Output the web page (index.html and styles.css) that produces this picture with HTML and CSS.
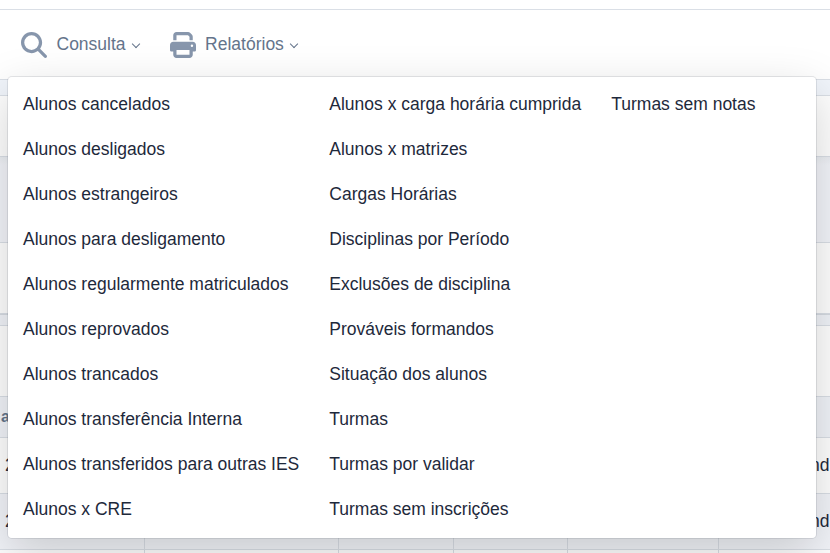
FILE: index.html
```html
<!DOCTYPE html>
<html lang="pt-BR">
<head>
<meta charset="utf-8">
<title>Relatórios</title>
<link rel="stylesheet" href="styles.css">
</head>
<body>
<div class="page">
  <div class="topbar"></div>
  <nav class="nav">
    <a class="nav-item">
      <svg class="icon" viewBox="0 0 512 512"><path d="M416 208c0 45.900-14.900 88.300-40 122.700L502.600 457.400c12.500 12.500 12.500 32.800 0 45.300s-32.800 12.500-45.300 0L330.700 376c-34.400 25.200-76.800 40-122.700 40C93.100 416 0 322.900 0 208S93.100 0 208 0S416 93.100 416 208zM208 352a144 144 0 1 0 0-288 144 144 0 1 0 0 288z"/></svg>
      <span>Consulta</span><i class="caret"></i>
    </a>
    <a class="nav-item">
      <svg class="icon" viewBox="0 0 512 512"><path d="M128 0C92.700 0 64 28.700 64 64v96h64V64H354.700L384 93.300V160h64V93.300c0-17-6.700-33.300-18.700-45.300L400 18.700C388 6.700 371.700 0 354.700 0H128zM384 352v32 64H128V384 368 352H384zm64 32h32c17.700 0 32-14.300 32-32V256c0-35.300-28.700-64-64-64H64c-35.300 0-64 28.700-64 64v96c0 17.700 14.300 32 32 32H64v64c0 35.300 28.700 64 64 64H384c35.300 0 64-28.700 64-64V384zM432 248a24 24 0 1 1 0 48 24 24 0 1 1 0-48z"/></svg>
      <span>Relatórios</span><i class="caret"></i>
    </a>
  </nav>
  <div class="strip"></div>
  <div class="panel heading"></div>
  <div class="gap"></div>
  <div class="panel filters"></div>
  <div class="divider"></div>
  <div class="panel tools"></div>
  <div class="table">
    <div class="row head"><div>a</div><div></div><div></div><div></div><div></div><div></div></div>
    <div class="row"><div>2</div><div></div><div></div><div></div><div></div><div>nd</div></div>
    <div class="row odd"><div>2</div><div></div><div></div><div></div><div></div><div>nd</div></div>
    <div class="row"><div></div><div></div><div></div><div></div><div></div><div></div></div>
  </div>
</div>
<div class="menu">
  <div class="col">
    <a>Alunos cancelados</a><a>Alunos desligados</a><a>Alunos estrangeiros</a><a>Alunos para desligamento</a><a>Alunos regularmente matriculados</a><a>Alunos reprovados</a><a>Alunos trancados</a><a>Alunos transferência Interna</a><a>Alunos transferidos para outras IES</a><a>Alunos x CRE</a>
  </div>
  <div class="col">
    <a>Alunos x carga horária cumprida</a><a>Alunos x matrizes</a><a>Cargas Horárias</a><a>Disciplinas por Período</a><a>Exclusões de disciplina</a><a>Prováveis formandos</a><a>Situação dos alunos</a><a>Turmas</a><a>Turmas por validar</a><a>Turmas sem inscrições</a>
  </div>
  <div class="col"><a>Turmas sem notas</a></div>
</div>
</body>
</html>
```
FILE: styles.css
```css
* { box-sizing: border-box; }
body {
  margin: 0;
  font: 17.5px/25px "Liberation Sans", Arial, sans-serif;
  color: #1e293b;
  overflow: hidden;
}
.page { height: 553px; overflow: hidden; background: #f1f5f9; }
.page > div, .nav { border-bottom: 1px solid #dadfe6; background: #fff; }
.topbar { height: 10px; }
.nav { height: 70px; display: flex; align-items: center; padding-left: 21px; gap: 30px; color: #64748b; }
.nav-item { display: flex; align-items: center; }
.icon { width: 26px; height: 26px; margin-right: 9.500px; fill: #8796ac; }
.caret {
  width: 6px; height: 6px; margin: -1px 1px 0 7px;
  border: solid #64748b; border-width: 0 1px 1px 0;
  transform: rotate(45deg);
}
.page > .strip { height: 16px; background: #f1f5fb; }
.heading { height: 61px; }
.page > .gap { height: 86px; background: linear-gradient(#ebeef3, #f3f5fa 8px); }
.filters { height: 71px; }
.page > .divider { height: 12px; background: #f1f4f9; border-top: 1px solid #d6dbe2; }
.tools { height: 71px; }
.row {
  display: grid; grid-template-columns: 145px 194px 115px 114px 151px 1fr;
  height: 56px; align-items: stretch; border-bottom: 1px solid #dadfe6;
}
.row > div { border-right: 1px solid #dadfe6; padding: 15px 0 0 5px; }
.row > div:last-child { border: 0; padding-left: 91px; }
.head { height: 41px; background: #f1f4f9; font-size: 16px; font-weight: bold; color: #64748b; }
.head > div { padding: 7px 0 0 1px; }
.odd { background: #f3f5fa; }
.menu {
  position: absolute; left: 7px; top: 76px; width: 810px; height: 463px;
  display: flex; padding: 5px 0; background: #fff; background-clip: padding-box;
  border: 1px solid rgba(98,105,118,.16); border-radius: 5px;
  box-shadow: 0 16px 48px rgba(0,0,0,.175);
}
.col a { display: block; padding: 10px 15px; white-space: nowrap; }
```
